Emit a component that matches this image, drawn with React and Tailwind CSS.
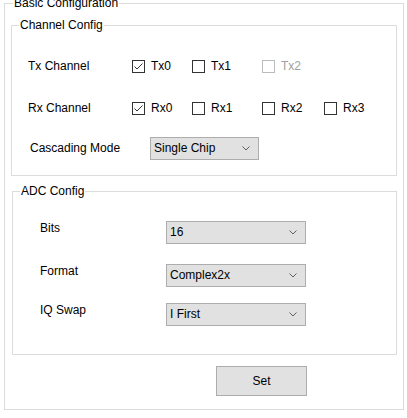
import React from 'react';

function Chevron() {
    return (
        <svg width="8" height="5" viewBox="0 0 8 5" className="shrink-0">
            <path d="M0.5 0.5 L4 4 L7.5 0.5" fill="none" stroke="#606060" strokeWidth="1" />
        </svg>
    );
}

function Select({ value, width }) {
    return (
        <div className={`flex items-center justify-between h-[23px] border border-[#adadad] bg-[#e1e1e1] pl-[3px] pr-[8px] ${width}`}>
            <span className="leading-[15px]">{value}</span>
            <Chevron />
        </div>
    );
}

function Check({ label, checked, disabled, width }) {
    return (
        <div className={`flex items-center ${width}`}>
            <span
                className={`w-[13px] h-[13px] border bg-white flex items-center justify-center ${
                    disabled ? 'border-[#bcbcbc]' : 'border-[#333333]'
                }`}
            >
                {checked && (
                    <svg width="11" height="11" viewBox="0 0 11 11">
                        <path d="M1.5 5.5 L4 8 L9.5 2.5" fill="none" stroke="#333333" strokeWidth="1" />
                    </svg>
                )}
            </span>
            <span className={`ml-[6px] leading-[15px] ${disabled ? 'text-[#a0a0a0]' : ''}`}>{label}</span>
        </div>
    );
}

export default function App() {
    return (
        <div className="w-[407px] h-[418px] overflow-hidden bg-white text-[12px] text-black font-['Liberation_Sans',Arial,sans-serif]">
            <fieldset className="ml-[4px] mt-[-4px] w-[400px] border border-[#dcdcdc] pl-[6px] pr-[6px] pb-[13px]">
                <legend className="ml-[2px] px-[1px] leading-[15px]">Basic Configuration</legend>

                <fieldset className="mt-[7px] border border-[#dcdcdc] pl-[6px] pb-[15px]">
                    <legend className="ml-[1px] px-[1px] leading-[15px]">Channel Config</legend>
                    <div className="pl-[10px] pt-[21px] flex flex-col">
                        <div className="flex items-center h-[24px]">
                            <span className="w-[104px] leading-[15px]">Tx Channel</span>
                            <Check label="Tx0" checked width="w-[60px]" />
                            <Check label="Tx1" width="w-[70px]" />
                            <Check label="Tx2" disabled width="w-[62px]" />
                        </div>
                        <div className="flex items-center h-[24px] mt-[18px]">
                            <span className="w-[104px] leading-[15px]">Rx Channel</span>
                            <Check label="Rx0" checked width="w-[60px]" />
                            <Check label="Rx1" width="w-[70px]" />
                            <Check label="Rx2" width="w-[62px]" />
                            <Check label="Rx3" width="w-[50px]" />
                        </div>
                        <div className="flex items-center h-[23px] mt-[17px] pl-[2px]">
                            <span className="w-[120px] leading-[15px]">Cascading Mode</span>
                            <Select value="Single Chip" width="w-[109px]" />
                        </div>
                    </div>
                </fieldset>

                <fieldset className="mt-[8px] ml-[1px] border border-[#dcdcdc] pl-[6px] pb-[28px]">
                    <legend className="ml-[1px] px-[1px] leading-[15px]">ADC Config</legend>
                    <div className="pl-[21px] pt-[22px] flex flex-col">
                        <div className="flex items-start h-[23px]">
                            <span className="w-[126px] leading-[15px]">Bits</span>
                            <Select value="16" width="w-[140px]" />
                        </div>
                        <div className="flex items-start h-[23px] mt-[20px]">
                            <span className="w-[126px] leading-[15px]">Format</span>
                            <Select value="Complex2x" width="w-[140px]" />
                        </div>
                        <div className="flex items-start h-[23px] mt-[16px]">
                            <span className="w-[126px] leading-[15px]">IQ Swap</span>
                            <Select value="I First" width="w-[140px]" />
                        </div>
                    </div>
                </fieldset>

                <button className="block mt-[11px] ml-[205px] w-[91px] h-[30px] border border-[#adadad] bg-[#e1e1e1] leading-[15px]">
                    Set
                </button>
            </fieldset>
        </div>
    );
}
